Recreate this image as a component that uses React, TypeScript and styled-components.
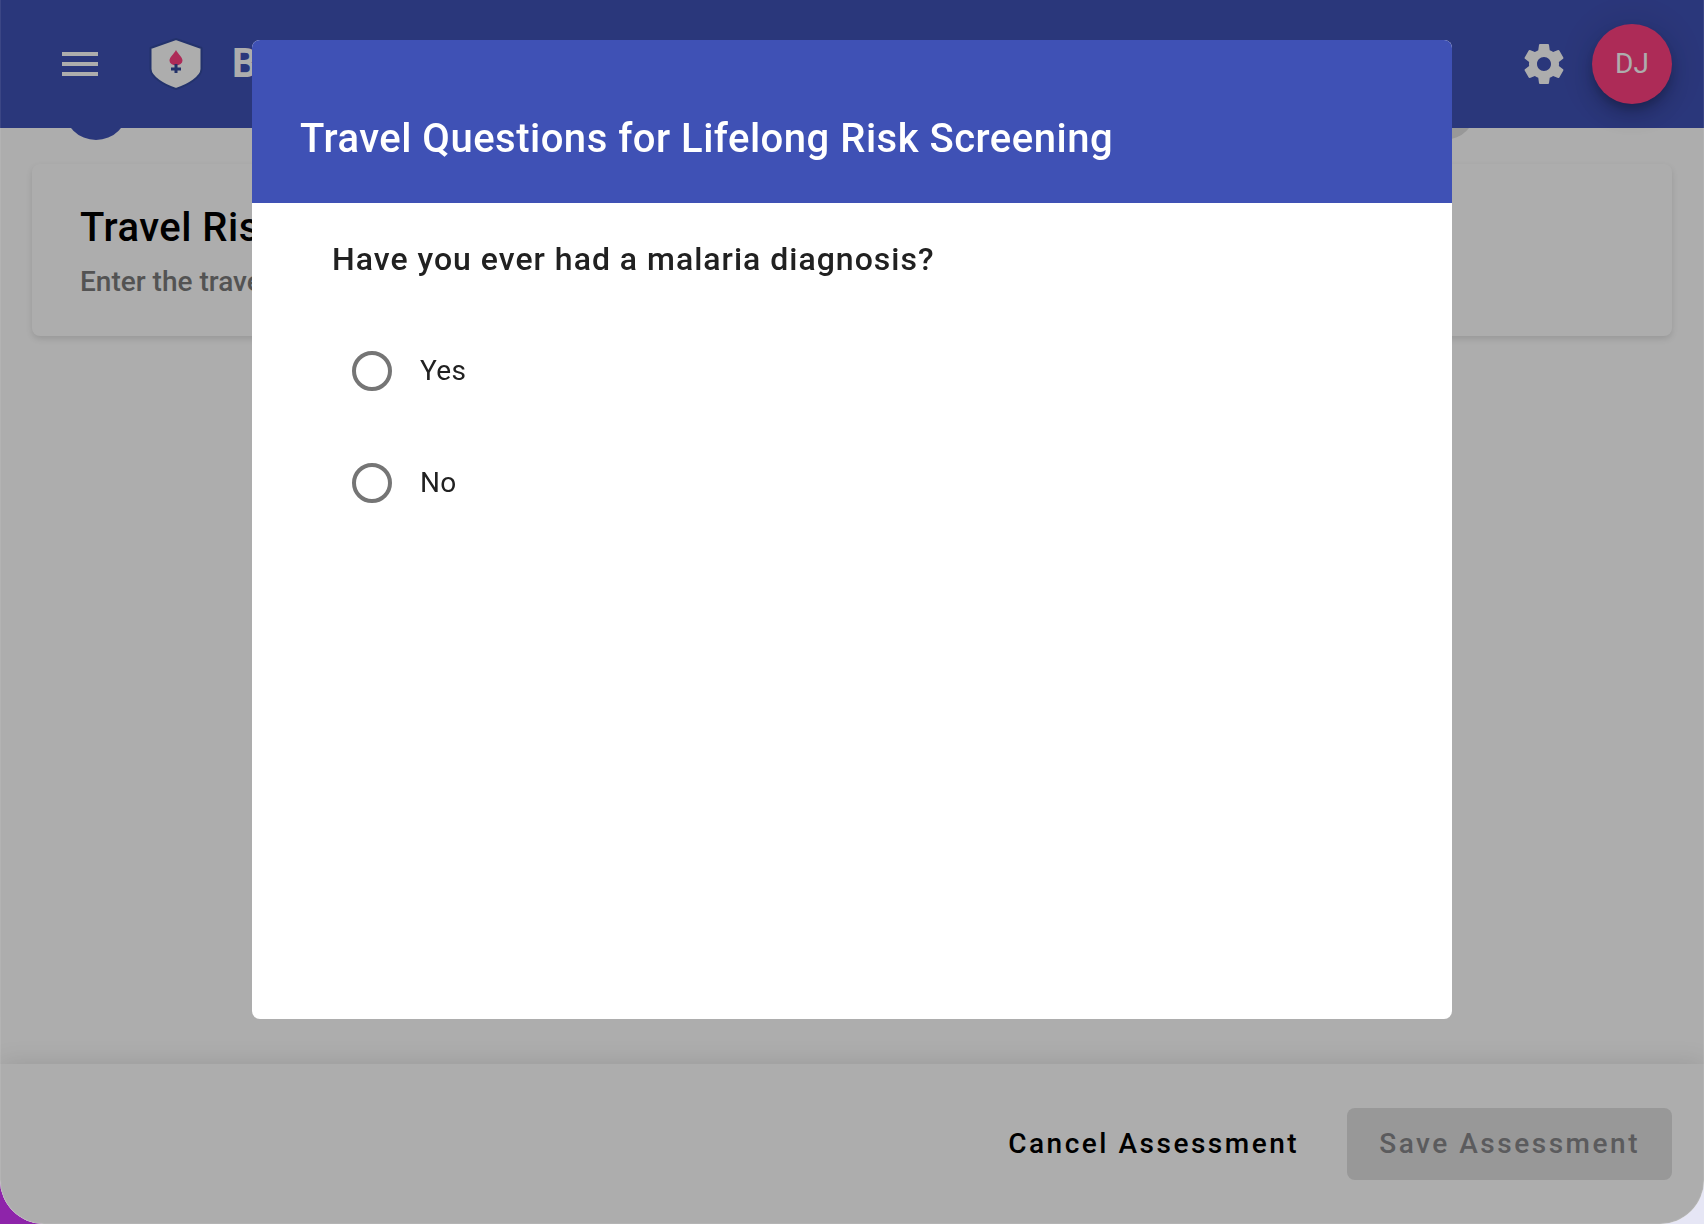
import React from "react";
import styled, { createGlobalStyle } from "styled-components";

const GlobalStyle = createGlobalStyle`
  *, *::before, *::after { box-sizing: border-box; }
  body {
    margin: 0;
    font-family: Roboto, "Liberation Sans", sans-serif;
    background: linear-gradient(90deg, #8e24aa 0%, #8e24aa 50%, #e6e6f5 50%, #e6e6f5 100%);
  }
  h1, h2, p, fieldset { margin: 0; }
`;

const Shell = styled.div`
  display: flex;
  flex-direction: column;
  min-height: 100vh;
  background: #fff;
  border-radius: 0 0 44px 44px;
  overflow: hidden;
`;

const Header = styled.header`
  display: flex;
  align-items: center;
  height: 128px;
  padding: 0 32px;
  background: #3f51b5;
  color: #fff;
`;

const IconButton = styled.button`
  display: flex;
  padding: 24px;
  border: 0;
  background: none;
  color: inherit;
  cursor: pointer;
`;

const Brand = styled.div`
  display: flex;
  align-items: center;
  gap: 28px;
  padding-left: 20px;
  font-size: 40px;
  line-height: 64px;
  font-weight: 700;
`;

const Spacer = styled.div`
  flex: 1;
`;

const Avatar = styled.button`
  width: 80px;
  height: 80px;
  border: 0;
  border-radius: 50%;
  background: #ff4081;
  color: #fff;
  font: 400 28px/72px Roboto, "Liberation Sans", sans-serif;
  box-shadow: 0 6px 10px -2px rgba(0, 0, 0, 0.2), 0 12px 20px rgba(0, 0, 0, 0.14), 0 2px 36px rgba(0, 0, 0, 0.12);
  cursor: pointer;
`;

const Main = styled.main`
  flex: 1;
`;

const Stepper = styled.div`
  display: flex;
  align-items: flex-end;
  justify-content: space-between;
  height: 12px;
  padding: 0 228px 0 64px;
  overflow: hidden;
`;

const StepDot = styled.span<{ $active?: boolean }>`
  width: 64px;
  height: 64px;
  border-radius: 50%;
  background: ${(p) => (p.$active ? "#3f51b5" : "#e0e0e0")};
`;

const Card = styled.section`
  display: flex;
  flex-direction: column;
  gap: 12px;
  margin: 24px 32px;
  padding: 40px 48px 36px;
  border-radius: 8px;
  background: #fff;
  box-shadow: 0 3px 6px rgba(0, 0, 0, 0.12);
`;

const CardTitle = styled.h2`
  font-size: 40px;
  line-height: 48px;
  font-weight: 500;
  letter-spacing: 0.0125em;
  color: #000;
`;

const CardSubtitle = styled.p`
  font-size: 28px;
  line-height: 36px;
  font-weight: 500;
  color: #7b7b7b;
`;

const Footer = styled.footer`
  display: flex;
  align-items: center;
  justify-content: flex-end;
  gap: 16px;
  height: 160px;
  padding: 0 32px;
  background: #fff;
  box-shadow: 0 0 24px rgba(0, 0, 0, 0.12);
`;

const ActionButton = styled.button`
  height: 72px;
  padding: 0 32px;
  border: 0;
  border-radius: 8px;
  background: none;
  color: #000;
  font: 500 28px/72px Roboto, "Liberation Sans", sans-serif;
  letter-spacing: 0.09em;
  cursor: pointer;

  &:disabled {
    background: #e0e0e0;
    color: #87878a;
    cursor: default;
  }
`;

const Backdrop = styled.div`
  position: fixed;
  inset: 0;
  display: flex;
  justify-content: center;
  align-items: flex-start;
  padding: 40px;
  border-radius: 0 0 44px 44px;
  border: solid rgba(255, 255, 255, 0.08);
  border-width: 0 1px 1px;
  background: rgba(0, 0, 0, 0.32);
`;

const Dialog = styled.div`
  display: flex;
  flex-direction: column;
  width: 100%;
  max-width: 1200px;
  height: 80vh;
  border-radius: 8px;
  background: #fff;
  overflow: hidden;
`;

const DialogTitle = styled.h1`
  padding: 67px 48px 32px;
  background: #3f51b5;
  color: #fff;
  font-size: 40px;
  line-height: 64px;
  font-weight: 500;
  letter-spacing: 0.0125em;
`;

const Question = styled.fieldset`
  display: flex;
  flex-direction: column;
  padding: 32px 80px;
  border: 0;
  color: #212121;
`;

const Legend = styled.legend`
  float: left;
  width: 100%;
  padding: 0;
  margin-bottom: 32px;
  font-size: 32px;
  line-height: 48px;
  font-weight: 500;
  letter-spacing: 1px;
`;

const Option = styled.label`
  display: flex;
  align-items: center;
  gap: 28px;
  height: 112px;
  padding-left: 20px;
  font-size: 28px;
  line-height: 40px;
  letter-spacing: 0.0125em;
  cursor: pointer;
`;

const Radio = styled.input`
  appearance: none;
  width: 40px;
  height: 40px;
  margin: 0;
  border: 4px solid #757575;
  border-radius: 50%;

  &:checked {
    border-color: #3f51b5;
    background: radial-gradient(circle, #3f51b5 10px, transparent 11px);
  }
`;

const MenuIcon = () => (
  <svg width="48" height="48" viewBox="0 0 24 24" fill="currentColor" aria-hidden="true">
    <path d="M3 18h18v-2H3v2zm0-5h18v-2H3v2zm0-7v2h18V6H3z" />
  </svg>
);

const GearIcon = () => (
  <svg width="48" height="48" viewBox="0 0 24 24" fill="currentColor" aria-hidden="true">
    <path d="M19.43 12.98c.04-.32.07-.64.07-.98s-.03-.66-.07-.98l2.11-1.65c.19-.15.24-.42.12-.64l-2-3.46c-.12-.22-.39-.3-.61-.22l-2.49 1c-.52-.4-1.08-.73-1.69-.98l-.38-2.65C14.46 2.18 14.25 2 14 2h-4c-.25 0-.46.18-.49.42l-.38 2.65c-.61.25-1.17.59-1.69.98l-2.49-1c-.23-.09-.49 0-.61.22l-2 3.46c-.13.22-.07.49.12.64l2.11 1.65c-.04.32-.07.65-.07.98s.03.66.07.98l-2.11 1.65c-.19.15-.24.42-.12.64l2 3.46c.12.22.39.3.61.22l2.49-1c.52.4 1.08.73 1.69.98l.38 2.65c.03.24.24.42.49.42h4c.25 0 .46-.18.49-.42l.38-2.65c.61-.25 1.17-.59 1.69-.98l2.49 1c.23.09.49 0 .61-.22l2-3.46c.12-.22.07-.49-.12-.64l-2.11-1.65zM12 15.5c-1.93 0-3.5-1.57-3.5-3.5s1.57-3.5 3.5-3.5 3.5 1.57 3.5 3.5-1.57 3.5-3.5 3.5z" />
  </svg>
);

const ShieldLogo = () => (
  <svg width="56" height="56" viewBox="0 0 56 56" aria-hidden="true">
    <path
      d="M28 3 L53.5 12 V33 C53.5 41 40 49 28 53 C16 49 2.5 41 2.5 33 V12 Z"
      fill="#fff"
      stroke="#344ba0"
      strokeWidth="2"
      strokeLinejoin="round"
    />
    <path d="M28 14 C30 18 34.5 21 34.5 24.5 A6.5 5 0 0 1 21.5 24.5 C21.5 21 26 18 28 14 Z" fill="#ff4081" />
    <path d="M28 28 V37 M23 33 H33" stroke="#344a9b" strokeWidth="3" fill="none" />
  </svg>
);

const choices = ["Yes", "No"];

export default function App() {
  return (
    <>
      <GlobalStyle />
      <Shell>
        <Header>
          <IconButton type="button" aria-label="Menu">
            <MenuIcon />
          </IconButton>
          <Brand>
            <ShieldLogo />
            <span>B</span>
          </Brand>
          <Spacer />
          <IconButton type="button" aria-label="Settings">
            <GearIcon />
          </IconButton>
          <Avatar type="button">DJ</Avatar>
        </Header>
        <Main>
          <Stepper>
            <StepDot $active />
            <StepDot />
          </Stepper>
          <Card>
            <CardTitle>Travel Risk</CardTitle>
            <CardSubtitle>Enter the travel</CardSubtitle>
          </Card>
        </Main>
        <Footer>
          <ActionButton type="button">Cancel Assessment</ActionButton>
          <ActionButton type="button" disabled>
            Save Assessment
          </ActionButton>
        </Footer>
      </Shell>
      <Backdrop>
        <Dialog role="dialog" aria-modal="true" aria-labelledby="dialog-title">
          <DialogTitle id="dialog-title">Travel Questions for Lifelong Risk Screening</DialogTitle>
          <Question>
            <Legend>Have you ever had a malaria diagnosis?</Legend>
            {choices.map((choice) => (
              <Option key={choice}>
                <Radio type="radio" name="malaria" value={choice} />
                {choice}
              </Option>
            ))}
          </Question>
        </Dialog>
      </Backdrop>
    </>
  );
}
